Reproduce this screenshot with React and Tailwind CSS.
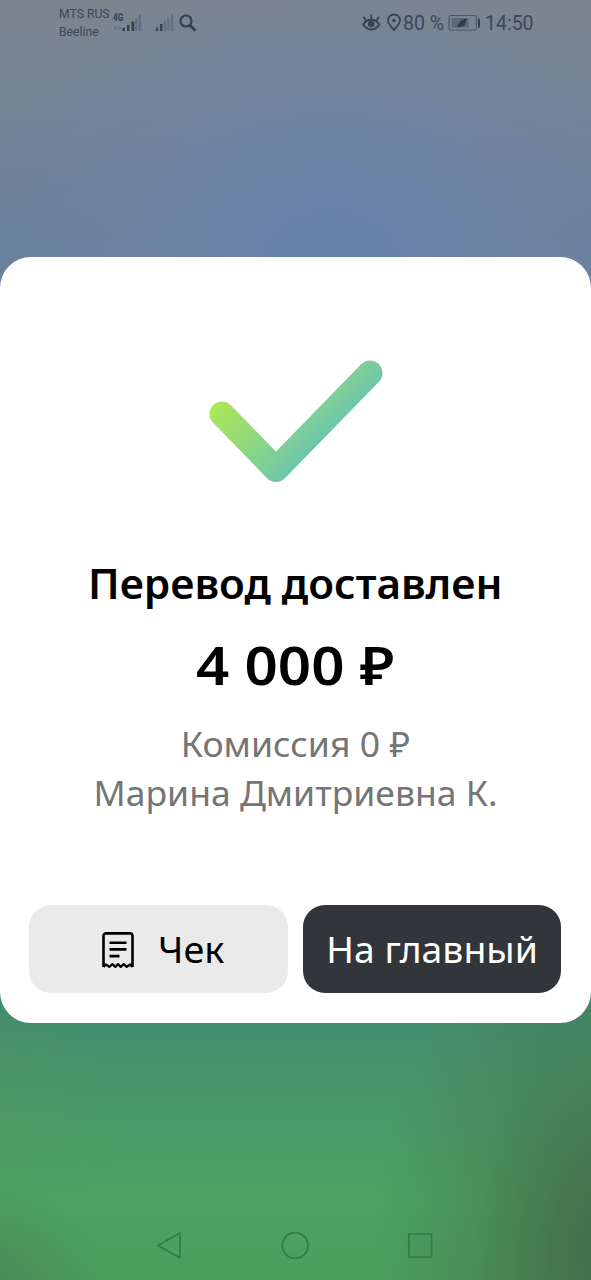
import React from 'react'

const StatusBar = () => {
    return (
        <header className="flex h-[46px] justify-between pl-[59px] pr-[58px] text-[#3a4756] font-['Roboto',sans-serif]">
            <div className="flex">
                <div className="w-[54px] pt-[5px] text-[12.200px] leading-[18px] whitespace-nowrap">
                    <p>MTS RUS</p>
                    <p>Beeline</p>
                </div>
                <div className="flex flex-col w-[30px] pt-[12px]">
                    <span className="h-[9px] text-[10px] leading-[11px] font-black scale-x-[0.8] origin-left">4G</span>
                    <svg className="-mt-[7px]" width="30" height="18" viewBox="0 0 30 18">
                        <path d="M1 14h7M3 12l-2 2 2 2M6 12l2 2-2 2" fill="none" stroke="#64748b" strokeWidth="1" />
                        <path d="M9.500 14h2.500v3h-2.500zM14 11h2.500v6H14zM18.500 7.500h2.700V17h-2.700z" fill="#34414f" />
                        <path d="M22 4h2v13h-2zM25.500 0H28v17h-2.500z" fill="#5f6e82" />
                    </svg>
                </div>
                <svg className="ml-[12px] mt-[14px]" width="20" height="18" viewBox="0 0 20 18">
                    <path d="M1 13.500h2.200V17H1zM5 10h2.500v7H5z" fill="#34414f" />
                    <path d="M8.800 6.500H11V17H8.800zM12.300 3.500h2V17h-2zM16 0h2.300v17H16z" fill="#5f6e82" />
                </svg>
                <svg className="ml-[4px] mt-[14px]" width="20" height="19" viewBox="0 0 20 19">
                    <circle cx="7" cy="7" r="5.500" fill="none" stroke="#34414f" strokeWidth="2.200" />
                    <path d="M11 11.200l5.500 5.500" stroke="#34414f" strokeWidth="3" />
                </svg>
            </div>

            <div className="flex">
                <svg className="mt-[13px]" width="21" height="19" viewBox="0 0 21 19" fill="none" stroke="#34414f" strokeWidth="2">
                    <path d="M2.200 11.500C4 8.500 7 6.800 10.200 6.800s6.300 1.700 8.100 4.700c-1.800 3-4.900 4.900-8.100 4.900S4 14.500 2.200 11.500z" />
                    <path d="M10.200 6V1.500M4.800 7.500L2.600 3.800M15.700 7.500l2.200-3.700" strokeWidth="1.700" />
                    <circle cx="10.200" cy="11" r="3.300" fill="#34414f" stroke="none" />
                </svg>
                <svg className="ml-[4px] mt-[13px]" width="16" height="19" viewBox="0 0 16 19" fill="none">
                    <path d="M8 17C5.500 13.800 2 10.600 2 7.400a6 6 0 0 1 12 0C14 10.600 10.500 13.800 8 17z" stroke="#34414f" strokeWidth="1.700" />
                    <circle cx="8" cy="7.500" r="1.700" fill="#34414f" />
                </svg>
                <span className="ml-[1px] w-[45px] mt-[12px] text-[19.500px] leading-[24px] whitespace-nowrap">80 %</span>
                <svg className="mt-[14px]" width="34" height="18" viewBox="0 0 34 18">
                    <rect x="1" y="1.500" width="27.500" height="14.500" rx="1.800" fill="none" stroke="#485867" strokeWidth="1.200" />
                    <rect x="3.500" y="4" width="17" height="9.500" fill="#5c6879" />
                    <path d="M9.500 13.500c.5-4.500 3.500-8 9-9-.3 5-2 8.200-5.500 8.200-1 0-2-.2-2.500.8z" fill="#303b46" />
                    <path d="M30 4.500h2v9h-2z" fill="#34414f" />
                </svg>
                <span className="ml-[3px] w-[48px] mt-[12px] text-[19.500px] leading-[24px] whitespace-nowrap">14:50</span>
            </div>
        </header>
    );
};

const CheckMark = () => (
    <svg className="mx-auto" width="180" height="128" viewBox="206 357 180 128" fill="none">
        <defs>
            <linearGradient id="check" gradientUnits="userSpaceOnUse" x1="212" y1="406" x2="287" y2="481">
                <stop offset="0" stopColor="#aee756" />
                <stop offset="0.600" stopColor="#88d588" />
                <stop offset="1" stopColor="#6bc3b1" />
            </linearGradient>
        </defs>
        <path d="M222 414l54 55.500L370 373" stroke="url(#check)" strokeWidth="25" strokeLinecap="round" strokeLinejoin="round" />
    </svg>
);

const ReceiptIcon = () => (
    <svg width="34" height="38" viewBox="0 0 34 38" fill="none" stroke="#000" strokeWidth="2.600">
        <path d="M2.500 36V5q0-2.600 2.600-2.600h23.800q2.600 0 2.600 2.600v31" />
        <path d="M2.500 36l2.300-2.500 3.500 2.300 3.100-2.600 2.900 2.600 2.700-2.600 2.700 2.600 2.900-2.600 3.100 2.600 3.500-2.300 2.300 2.500" strokeWidth="2.300" strokeLinejoin="round" />
        <path d="M8.500 11.700h17M8.500 18.400h17M8.500 25.100h10" />
    </svg>
);

const NavBar = () => (
    <nav className="flex items-center h-[70px] pl-[155px] text-[#337a47]">
        <svg width="28" height="32" viewBox="0 0 28 32" fill="none" stroke="currentColor" strokeWidth="1.700" strokeLinejoin="round">
            <path d="M2.800 16.500L25 4v25z" />
        </svg>
        <svg className="ml-[97px]" width="30" height="32" viewBox="0 0 30 32" fill="none" stroke="currentColor" strokeWidth="1.700">
            <circle cx="15.200" cy="16.500" r="12.800" />
        </svg>
        <svg className="ml-[96px]" width="28" height="32" viewBox="0 0 28 32" fill="none" stroke="currentColor" strokeWidth="1.700" strokeLinejoin="round">
            <rect x="2.800" y="5" width="22.800" height="23" />
        </svg>
    </nav>
);

const App = () => {
    return (
        <div className="flex flex-col w-[591px] h-[1280px] overflow-hidden bg-[linear-gradient(180deg,#7d848e_0px,#758495_110px,#6d8099_200px,#66809c_257px,#438c6e_1010px,#49986a_1110px,#4ba462_1200px,#4a9e5c_1280px)]">
            <div className="h-[290px] -mb-[33px] bg-[radial-gradient(ellipse_380px_290px_at_56%_260px,#6482ae_0%,#6a83a9_25%,#7083a2cc_55%,#7083a200_100%)]">
                <StatusBar />
            </div>

            <main className="relative flex flex-col h-[766px] rounded-[31px] bg-white px-[29px] pt-[100px] pb-[30px] text-center text-black font-['Noto_Sans',sans-serif]">
                <CheckMark />
                <h1 className="mt-[68px] text-[41px] leading-[60px] font-semibold whitespace-nowrap">
                    <span className="inline-block scale-x-[1.03]">Перевод доставлен</span>
                </h1>
                <p className="mt-[15px] text-[53px] leading-[74px] font-semibold whitespace-nowrap">
                    <span className="inline-block scale-x-[1.1]">4 000 ₽</span>
                </p>
                <div className="mt-[17px] text-[35px] leading-[49px] text-[#757575] whitespace-nowrap">
                    <p className="scale-x-[1.018]">Комиссия 0 ₽</p>
                    <p className="scale-x-[1.015]">Марина Дмитриевна К.</p>
                </div>
                <div className="grid grid-cols-2 gap-[15px] mt-auto w-[532px] h-[88px] text-[36px] leading-[50px] font-medium whitespace-nowrap">
                    <button className="flex items-center justify-center gap-[23px] rounded-[22px] bg-[#eaeaea] pt-[1px] pl-[5px]">
                        <ReceiptIcon />
                        <span className="origin-left scale-x-[1.05] font-[450]">Чек</span>
                    </button>
                    <button className="flex items-center justify-center rounded-[22px] bg-[#32363a] pt-[2px] text-white">
                        <span className="scale-x-[1.037] font-[450]">На главный</span>
                    </button>
                </div>
            </main>

            <footer className="flex flex-1 flex-col justify-end -mt-[33px] bg-[radial-gradient(ellipse_240px_330px_at_104%_88%,#446c4a_0%,#446c4acc_25%,#446c4a55_60%,#446c4a00_100%),radial-gradient(ellipse_140px_120px_at_-5%_106%,#47794faa_0%,#47794f00_100%),radial-gradient(ellipse_120px_160px_at_0%_55%,#559a5b55_0%,#559a5b00_100%)]">
                <NavBar />
            </footer>
        </div>
    );
};

export default App;
